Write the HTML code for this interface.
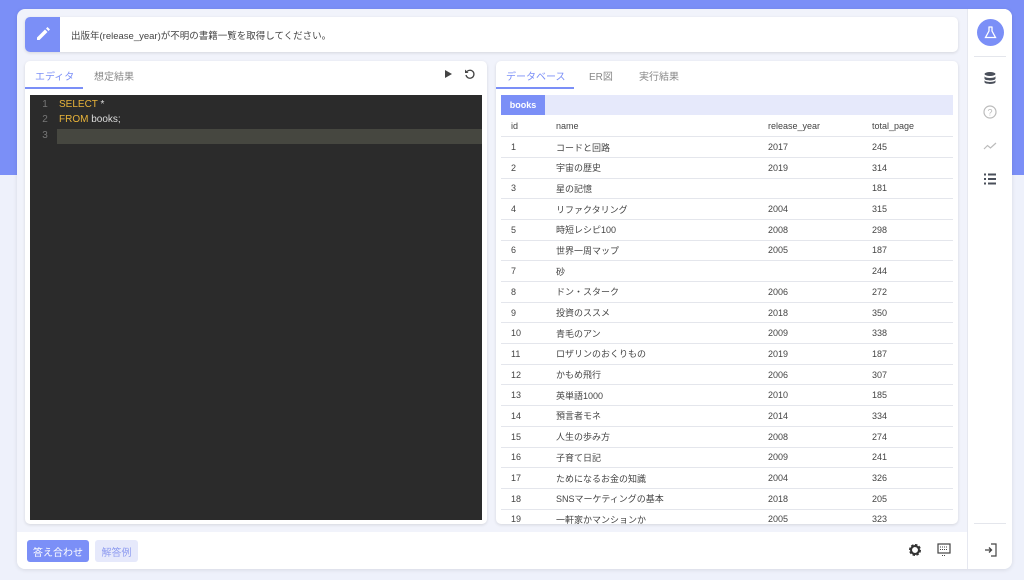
<!DOCTYPE html>
<html><head><meta charset="utf-8"><style>
*{box-sizing:border-box;margin:0;padding:0}
body{width:1024px;height:580px;overflow:hidden;background:#eef1fb;font-family:"Liberation Sans","Noto Sans CJK JP",sans-serif;position:relative}
.top{position:absolute;left:0;top:0;width:1024px;height:175px;background:#7b8ff7}
.main{position:absolute;left:17px;top:9px;width:995px;height:560px;background:#f1f3fb;border-radius:8px;overflow:hidden;box-shadow:0 1px 4px rgba(0,0,0,.1)}
.side{position:absolute;right:0;top:0;width:45px;height:560px;background:#fff;border-left:1px solid #e6e8f0}
.card{position:absolute;background:#fff;border-radius:5px;box-shadow:0 1px 3px rgba(0,0,0,.12)}
.tab{position:absolute;font-size:10px;color:#888}
.tab.on{color:#7b8ff7}
.editor{position:absolute;left:5px;top:34px;width:452px;height:425px;background:#2b2b2b}
.ln{position:absolute;left:0;width:30px;text-align:center;color:#777;font-size:10px}
.code{position:absolute;left:29px;font-size:10px;color:#ddd}
.kw{color:#e8b339}
table{position:absolute;left:5px;top:55px;width:452px;border-collapse:collapse;font-size:9px;color:#444}
td{height:20.7px;border-bottom:1px solid #e4e6ec;padding-left:10px}
.foot{position:absolute;left:0;top:523px;width:950px;height:37px;background:#fff}
.btn{position:absolute;top:8px;height:22px;border-radius:3px;font-size:10px;display:flex;align-items:center;justify-content:center}
</style></head><body>
<div class="top"></div>
<div class="main">
 <div class="card" style="left:8px;top:8px;width:933px;height:35px;overflow:hidden">
  <div style="position:absolute;left:0;top:0;width:35px;height:35px;background:#7b8ff7">
   <svg width="35" height="35" viewBox="0 0 35 35"><path d="M12 23v-2.5l8-8 2.5 2.5-8 8zM21 11.5l1.5-1.5 2.5 2.5-1.5 1.5z" fill="#fff"/></svg></div>
  <div style="position:absolute;left:46px;top:11px;font-size:9.5px;color:#444">出版年(release_year)が不明の書籍一覧を取得してください。</div>
 </div>
 <div class="card" style="left:8px;top:52px;width:462px;height:463px">
  <div class="tab on" style="left:10px;top:7px">エディタ</div>
  <div style="position:absolute;left:0;top:26px;width:58px;height:2px;background:#7b8ff7"></div>
  <div class="tab" style="left:69px;top:7px">想定結果</div>
  <div style="position:absolute;left:420px;top:9px;width:0;height:0;border-left:7px solid #444;border-top:4px solid transparent;border-bottom:4px solid transparent"></div>
  <svg style="position:absolute;left:439px;top:7px" width="12" height="12" viewBox="0 0 12 12"><path d="M3 3.5A4 4 0 1 1 2 7" fill="none" stroke="#444" stroke-width="1.3"/><path d="M1 1.5v3.5h3.5z" fill="#444"/></svg>
  <div class="editor">
   <div style="position:absolute;left:27px;top:34px;width:425px;height:15px;background:#464740"></div>
   <div class="ln" style="top:4px">1</div><div class="ln" style="top:19px">2</div><div class="ln" style="top:35px">3</div>
   <div class="code" style="top:4px"><span class="kw">SELECT</span> *</div>
   <div class="code" style="top:19px"><span class="kw">FROM</span> books;</div>
  </div>
 </div>
 <div class="card" style="left:479px;top:52px;width:462px;height:463px;overflow:hidden">
  <div class="tab on" style="left:10px;top:7px">データベース</div>
  <div style="position:absolute;left:0;top:26px;width:78px;height:2px;background:#7b8ff7"></div>
  <div class="tab" style="left:93px;top:7px">ER図</div>
  <div class="tab" style="left:143px;top:7px">実行結果</div>
  <div style="position:absolute;left:5px;top:34px;width:452px;height:20px;background:#e6e9fb"></div>
  <div style="position:absolute;left:5px;top:34px;width:44px;height:20px;background:#7b8ff7;color:#fff;font-size:9px;line-height:20px;text-align:center;font-weight:bold">books</div>
  <table>
  <tr><td style="width:45px">id</td><td style="width:212px">name</td><td style="width:104px">release_year</td><td>total_page</td></tr>
  <tr><td>1</td><td>コードと回路</td><td>2017</td><td>245</td></tr>
  <tr><td>2</td><td>宇宙の歴史</td><td>2019</td><td>314</td></tr>
  <tr><td>3</td><td>星の記憶</td><td></td><td>181</td></tr>
  <tr><td>4</td><td>リファクタリング</td><td>2004</td><td>315</td></tr>
  <tr><td>5</td><td>時短レシピ100</td><td>2008</td><td>298</td></tr>
  <tr><td>6</td><td>世界一周マップ</td><td>2005</td><td>187</td></tr>
  <tr><td>7</td><td>砂</td><td></td><td>244</td></tr>
  <tr><td>8</td><td>ドン・スターク</td><td>2006</td><td>272</td></tr>
  <tr><td>9</td><td>投資のススメ</td><td>2018</td><td>350</td></tr>
  <tr><td>10</td><td>青毛のアン</td><td>2009</td><td>338</td></tr>
  <tr><td>11</td><td>ロザリンのおくりもの</td><td>2019</td><td>187</td></tr>
  <tr><td>12</td><td>かもめ飛行</td><td>2006</td><td>307</td></tr>
  <tr><td>13</td><td>英単語1000</td><td>2010</td><td>185</td></tr>
  <tr><td>14</td><td>預言者モネ</td><td>2014</td><td>334</td></tr>
  <tr><td>15</td><td>人生の歩み方</td><td>2008</td><td>274</td></tr>
  <tr><td>16</td><td>子育て日記</td><td>2009</td><td>241</td></tr>
  <tr><td>17</td><td>ためになるお金の知識</td><td>2004</td><td>326</td></tr>
  <tr><td>18</td><td>SNSマーケティングの基本</td><td>2018</td><td>205</td></tr>
  <tr><td>19</td><td>一軒家かマンションか</td><td>2005</td><td>323</td></tr>
  </table>
 </div>
 <div class="foot">
  <div class="btn" style="left:10px;width:62px;background:#7b8ff7;color:#fff">答え合わせ</div>
  <div class="btn" style="left:78px;width:43px;background:#e6e9fb;color:#8f9cf0">解答例</div>
  <svg style="position:absolute;left:891px;top:11px" width="14" height="14" viewBox="0 0 14 14"><circle cx="7" cy="7" r="4.5" fill="none" stroke="#333" stroke-width="3" stroke-dasharray="2.2 1.3"/><circle cx="7" cy="7" r="4" fill="none" stroke="#333" stroke-width="2"/></svg>
  <svg style="position:absolute;left:920px;top:11px" width="14" height="14" viewBox="0 0 14 14"><rect x="1" y="1" width="12" height="9" fill="none" stroke="#444" stroke-width="1.2"/><path d="M3 4h8M3 6.5h8" stroke="#444" stroke-dasharray="1 1"/><path d="M5 12.5h4" stroke="#444" stroke-dasharray="1 1"/></svg>
 </div>
 <div class="side">
  <div style="position:absolute;left:9px;top:10px;width:27px;height:27px;border-radius:50%;background:#7b8ff7"></div>
  <svg style="position:absolute;left:15px;top:16px" width="15" height="15" viewBox="0 0 15 15"><path d="M5.5 2h4M6 2v4l-3.5 6.5h10L9 6V2" fill="none" stroke="#fff" stroke-width="1.3"/></svg>
  <div style="position:absolute;left:6px;top:47px;width:32px;height:1px;background:#e4e6ec"></div>
  <svg style="position:absolute;left:15px;top:62px" width="14" height="14" viewBox="0 0 14 14"><ellipse cx="7" cy="3" rx="5.5" ry="2" fill="#4a4f5a"/><path d="M1.5 5c0 2.6 11 2.6 11 0v2.5c0 2.6-11 2.6-11 0zM1.5 9c0 2.6 11 2.6 11 0v2c0 2.6-11 2.6-11 0z" fill="#4a4f5a"/></svg>
  <svg style="position:absolute;left:15px;top:96px" width="14" height="14" viewBox="0 0 14 14"><circle cx="7" cy="7" r="6" fill="none" stroke="#bbb" stroke-width="1.2"/><text x="7" y="10.5" font-size="9" text-anchor="middle" fill="#bbb" font-family="Liberation Sans">?</text></svg>
  <svg style="position:absolute;left:15px;top:130px" width="14" height="14" viewBox="0 0 14 14"><path d="M1 10l3.5-3.5 3 2.5L13 4" fill="none" stroke="#bbb" stroke-width="1.2"/></svg>
  <svg style="position:absolute;left:15px;top:163px" width="14" height="14" viewBox="0 0 14 14"><path d="M1 2.5h2M5 2.5h8M1 7h2M5 7h8M1 11.5h2M5 11.5h8" stroke="#4a4f5a" stroke-width="2"/></svg>
  <div style="position:absolute;left:6px;top:514px;width:32px;height:1px;background:#e4e6ec"></div>
  <svg style="position:absolute;left:16px;top:534px" width="14" height="14" viewBox="0 0 14 14"><path d="M7 1h5v12H7" fill="none" stroke="#444" stroke-width="1.2"/><path d="M1 7h6M5 4.5L7.5 7 5 9.5" fill="none" stroke="#444" stroke-width="1.3"/></svg>
 </div>
</div>
</body></html>
